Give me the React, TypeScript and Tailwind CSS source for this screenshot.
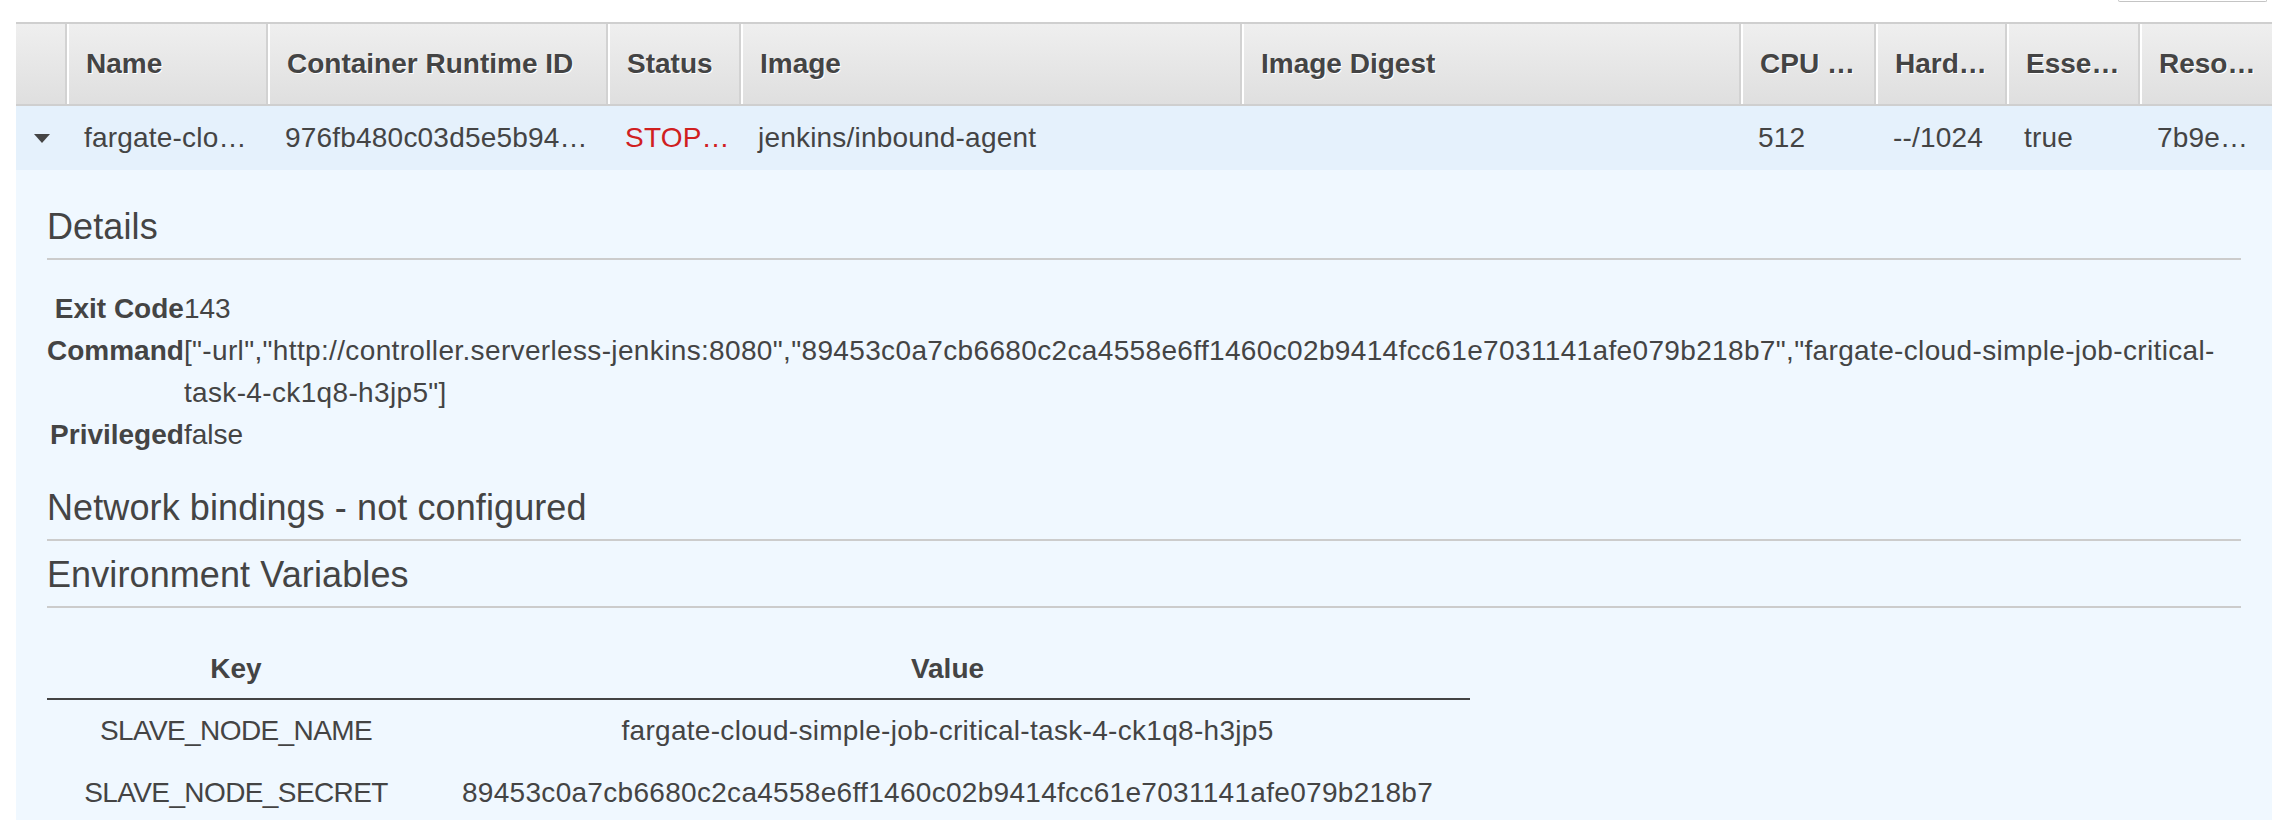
import React from "react";

const columns = [
  { label: "", width: "w-[51px]" },
  { label: "Name", width: "w-[201px]" },
  { label: "Container Runtime ID", width: "w-[340px]" },
  { label: "Status", width: "w-[133px]" },
  { label: "Image", width: "w-[501px]" },
  { label: "Image Digest", width: "w-[499px]" },
  { label: "CPU …", width: "w-[135px]" },
  { label: "Hard…", width: "w-[131px]" },
  { label: "Esse…", width: "w-[133px]" },
  { label: "Reso…", width: "w-[132px]" },
];

const rowCells = [
  "fargate-clo…",
  "976fb480c03d5e5b94…",
  "STOP…",
  "jenkins/inbound-agent",
  "",
  "512",
  "--/1024",
  "true",
  "7b9e…",
];

const envVars = [
  { key: "SLAVE_NODE_NAME", value: "fargate-cloud-simple-job-critical-task-4-ck1q8-h3jp5" },
  {
    key: "SLAVE_NODE_SECRET",
    value: "89453c0a7cb6680c2ca4558e6ff1460c02b9414fcc61e7031141afe079b218b7",
  },
];

function SectionTitle({ children, className = "" }: { children: React.ReactNode; className?: string }) {
  return (
    <h3
      className={`text-[36px] leading-[42px] font-normal text-[#444] pb-[10px] border-b-2 border-[#cccccc] tracking-[0.1px] ${className}`}
    >
      {children}
    </h3>
  );
}

export default function App() {
  return (
    <div className="h-[820px] bg-white font-['Liberation_Sans',Arial,sans-serif] text-[#444] overflow-hidden">
      {/* top toolbar edge */}
      <div className="h-[22px] flex justify-end pr-[27px]">
        <div className="w-[149px] h-[2px] border-x border-b border-[#c4c4c4] rounded-b-[3px]" />
      </div>

      <div className="ml-[16px] w-[2256px]">
        {/* HEADER */}
        <div className="flex h-[84px] border-t-2 border-b-2 border-[#cfcfcf] bg-gradient-to-b from-[#efefef] to-[#dfdfdf]">
          {columns.map((col, i) => (
            <div
              key={i}
              className={`${col.width} shrink-0 flex items-center pl-[19px] text-[28px] font-bold text-[#444] [text-shadow:1px_1px_0_#fff] ${
                i < columns.length - 1 ? "border-r-2 border-r-[#d2d2d2]" : ""
              } ${i > 0 ? "shadow-[inset_2px_0_0_#fff]" : ""}`}
            >
              {col.label}
            </div>
          ))}
        </div>

        {/* ROW */}
        <div className="flex h-[64px] bg-[#e5f1fc] text-[28px]">
          <div className="w-[51px] shrink-0 flex items-center pl-[18px]">
            <svg width="16" height="9" viewBox="0 0 16 9">
              <path d="M0 0 H16 L8 9 Z" fill="#444" />
            </svg>
          </div>
          {rowCells.map((text, i) => (
            <div
              key={i}
              className={`${columns[i + 1].width} shrink-0 flex items-center pl-[17px] whitespace-nowrap tracking-[0.2px] ${
                i === 2 ? "text-[#d0201f]" : "text-[#444]"
              }`}
            >
              {text}
            </div>
          ))}
        </div>

        {/* DETAILS PANEL */}
        <div className="bg-[#f0f8ff] pl-[31px] pr-[31px] pt-[36px] pb-[40px]">
          <SectionTitle>Details</SectionTitle>

          <div className="mt-[28px] grid grid-cols-[auto_1fr] text-[28px] leading-[42px]">
            <div className="font-bold text-right">Exit Code</div>
            <div>143</div>
            <div className="font-bold text-right">Command</div>
            <div className="whitespace-nowrap tracking-[0.35px]">
              ["-url","http://controller.serverless-jenkins:8080","89453c0a7cb6680c2ca4558e6ff1460c02b9414fcc61e7031141afe079b218b7","fargate-cloud-simple-job-critical-
              <br />
              task-4-ck1q8-h3jp5"]
            </div>
            <div className="font-bold text-right">Privileged</div>
            <div>false</div>
          </div>

          <SectionTitle className="mt-[31px]">Network bindings - not configured</SectionTitle>
          <SectionTitle className="mt-[13px]">Environment Variables</SectionTitle>

          <div className="mt-[40px] w-[1423px] text-[28px] leading-[42px]">
            <div className="flex font-bold pb-[8px] border-b-2 border-[#444]">
              <div className="w-[378px] text-center">Key</div>
              <div className="flex-1 text-center">Value</div>
            </div>
            {envVars.map((env) => (
              <div key={env.key} className="flex h-[62px] items-center">
                <div className="w-[378px] text-center tracking-[-0.6px]">{env.key}</div>
                <div className="flex-1 text-center tracking-[0.3px]">{env.value}</div>
              </div>
            ))}
          </div>
        </div>
      </div>
    </div>
  );
}
